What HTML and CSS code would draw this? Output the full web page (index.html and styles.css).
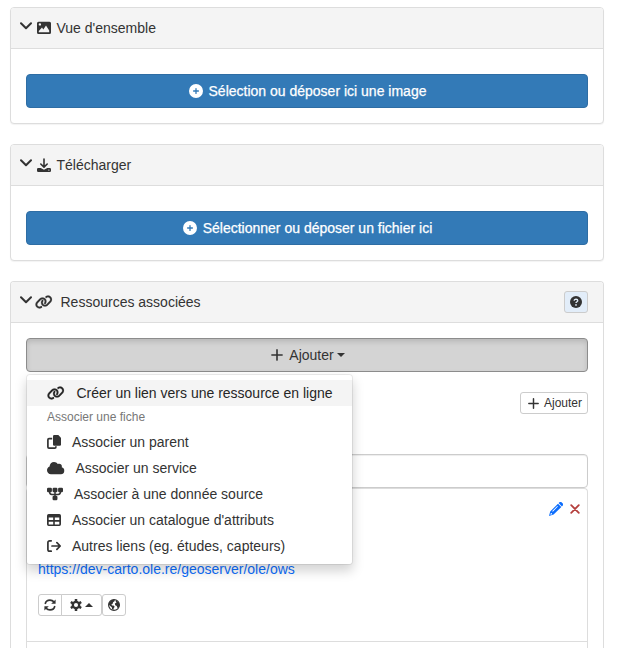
FILE: index.html
```
<!DOCTYPE html>
<html lang="fr">
<head>
<meta charset="utf-8">
<title>Ressources associées</title>
<link rel="stylesheet" href="styles.css">
</head>
<body>
<svg class="sprite" aria-hidden="true">
  <symbol id="chevron" viewBox="0 0 12 8"><path d="M1 1.200l5 5 5-5" fill="none" stroke="currentColor" stroke-width="2" stroke-linecap="round" stroke-linejoin="round"/></symbol>
  <symbol id="plus-circle" viewBox="0 0 512 512"><path d="M256 512A256 256 0 1 0 256 0a256 256 0 1 0 0 512zM232 344V280H168c-13.300 0-24-10.700-24-24s10.700-24 24-24h64V168c0-13.300 10.700-24 24-24s24 10.700 24 24v64h64c13.300 0 24 10.700 24 24s-10.700 24-24 24H280v64c0 13.300-10.700 24-24 24s-24-10.700-24-24z"/></symbol>
  <symbol id="link" viewBox="0 0 640 512"><path stroke="currentColor" stroke-width="8" d="M579.800 267.700c56.500-56.500 56.500-148 0-204.500c-50-50-128.800-56.500-186.300-15.400l-1.600 1.100c-14.400 10.300-17.700 30.300-7.400 44.600s30.300 17.700 44.600 7.400l1.600-1.100c32.100-22.900 76-19.300 103.800 8.600c31.500 31.500 31.500 82.500 0 114L422.300 334.800c-31.500 31.500-82.500 31.500-114 0c-27.900-27.900-31.500-71.800-8.600-103.800l1.100-1.600c10.300-14.400 6.900-34.400-7.400-44.600s-34.400-6.900-44.600 7.400l-1.100 1.600C206.500 251.200 213 330 263 380c56.500 56.500 148 56.500 204.500 0L579.800 267.700zM60.200 244.300c-56.500 56.500-56.500 148 0 204.500c50 50 128.800 56.500 186.300 15.400l1.600-1.100c14.400-10.300 17.700-30.300 7.400-44.600s-30.300-17.700-44.600-7.400l-1.600 1.100c-32.100 22.900-76 19.300-103.800-8.600C74 372 74 321 105.500 289.500L217.700 177.200c31.500-31.500 82.500-31.500 114 0c27.900 27.900 31.500 71.800 8.600 103.900l-1.100 1.600c-10.300 14.400-6.900 34.400 7.400 44.600s34.400 6.900 44.600-7.400l1.100-1.600C433.500 260.800 427 182 377 132c-56.500-56.500-148-56.500-204.500 0L60.200 244.300z"/></symbol>
  <symbol id="image" viewBox="0 0 14 14"><path fill-rule="evenodd" d="M1.500.7h11A1.500 1.500 0 0 1 14 2.200v9.300a1.500 1.500 0 0 1-1.500 1.500h-11A1.500 1.500 0 0 1 0 11.500V2.200A1.500 1.500 0 0 1 1.500.7zM2.900 2.200a1.200 1.200 0 1 0 0 2.400 1.200 1.200 0 0 0 0-2.400zM1.800 11.200h10.400V9.600L9 4.600 6.300 8.600 5 6.400 1.800 10z"/></symbol>
  <symbol id="download" viewBox="0 0 14 14"><path d="M7 1v7.800M3.800 6L7 9.100 10.200 6" fill="none" stroke="currentColor" stroke-width="1.600" stroke-linecap="round" stroke-linejoin="round"/><path fill-rule="evenodd" d="M1.200 10h2.500L7 11.800 10.300 10h2.500A1.200 1.200 0 0 1 14 11.200v1.600a1.200 1.200 0 0 1-1.200 1.200H1.200A1.200 1.200 0 0 1 0 12.800v-1.600A1.200 1.200 0 0 1 1.200 10zM11.900 11.500a.6.6 0 1 0 0 1.200.6.6 0 0 0 0-1.200z"/></symbol>
  <symbol id="help" viewBox="0 0 12 12"><circle cx="6" cy="6" r="6"/><path d="M4.200 4.700c0-2 3.600-1.900 3.600 0C7.800 5.700 6 5.800 6 7" fill="none" stroke="#e2edf9" stroke-width="1.300"/><circle cx="6" cy="8.900" r=".85" fill="#e2edf9"/></symbol>
  <symbol id="plus" viewBox="0 0 12 12"><path d="M6 .9v10.200M.9 6h10.200" fill="none" stroke="currentColor" stroke-width="1.600" stroke-linecap="round"/></symbol>
  <symbol id="copy" viewBox="0 0 14 14"><path d="M7.200 0h4.100L14 2.700v6.800a1.200 1.200 0 0 1-1.200 1.200H7.200A1.200 1.200 0 0 1 6 9.500V1.200A1.200 1.200 0 0 1 7.200 0z"/><path d="M5.200 3.700H2a1.100 1.100 0 0 0-1.100 1.100v7.200A1.100 1.100 0 0 0 2 13.100h5.800a1.100 1.100 0 0 0 1.100-1.100v-.8" fill="none" stroke="currentColor" stroke-width="1.700"/></symbol>
  <symbol id="cloud" viewBox="0 0 640 512"><path d="M0 336c0 79.500 64.500 144 144 144H512c70.700 0 128-57.300 128-128c0-61.900-44-113.600-102.400-125.400c4.100-10.700 6.400-22.400 6.400-34.600c0-53-43-96-96-96c-19.700 0-38.100 6-53.300 16.200C367 64.200 315.300 32 256 32C167.600 32 96 103.600 96 192c0 2.700 .1 5.400 .2 8.100C40.200 219.800 0 273.200 0 336z"/></symbol>
  <symbol id="sources" viewBox="0 0 16 14"><rect x="0" y=".8" width="4.900" height="4.500" rx="1.200"/><rect x="5.550" y=".8" width="4.900" height="4.500" rx="1.200"/><rect x="11.100" y=".8" width="4.900" height="4.500" rx="1.200"/><rect x="5.550" y="8.700" width="4.900" height="4.500" rx="1.200"/><path d="M2.500 4.500c0 2.300.5 2.900 2.300 2.900h6.400c1.800 0 2.300-.6 2.300-2.900M8 4.500v5" fill="none" stroke="currentColor" stroke-width="1.500"/></symbol>
  <symbol id="table" viewBox="0 0 14 14"><path fill-rule="evenodd" d="M1.700 1h10.600A1.700 1.700 0 0 1 14 2.700v8.600a1.700 1.700 0 0 1-1.700 1.700H1.700A1.700 1.700 0 0 1 0 11.300V2.700A1.700 1.700 0 0 1 1.700 1zM1.700 4.500v2.600h4.500V4.500zM7.800 4.500v2.600h4.500V4.500zM1.700 8.700v2.700h4.500V8.700zM7.800 8.700v2.700h4.500V8.700z"/></symbol>
  <symbol id="exit" viewBox="0 0 14 14"><path d="M4.200 1.800H2.600A1.700 1.700 0 0 0 .9 3.500v7a1.700 1.700 0 0 0 1.700 1.700h1.600M5 7h8M9.900 3.700L13.200 7l-3.300 3.300" fill="none" stroke="currentColor" stroke-width="1.700" stroke-linecap="round" stroke-linejoin="round"/></symbol>
  <symbol id="pencil" viewBox="0 0 14 14"><path fill-rule="evenodd" d="M9 1.700l3.300 3.300-7.700 7.600L0 14l1.200-4.500zM8.300 4L3.200 9.100l.6.600L8.900 4.600zM1.900 11l-.6 1.700 1.800-.5-.2-.9z"/><path d="M9.600 1.100l.6-.6a1.800 1.800 0 0 1 2.600 0l.7.7a1.800 1.800 0 0 1 0 2.600l-.6.600z"/></symbol>
  <symbol id="cross" viewBox="0 0 10 10"><path d="M1.200 1.200l7.600 7.600M8.800 1.200L1.200 8.800" fill="none" stroke="currentColor" stroke-width="1.800" stroke-linecap="round"/></symbol>
  <symbol id="refresh" viewBox="0 0 12 12"><path d="M1.200 5C1.600 2.600 3.700 1.100 6 1.100c1.600 0 2.900.6 4 1.800M10.800 7c-.4 2.400-2.500 3.900-4.800 3.900-1.600 0-2.900-.6-4-1.800" fill="none" stroke="currentColor" stroke-width="1.600"/><path d="M11.600.4v4.400H7.200zM.4 11.600V7.200h4.400z"/></symbol>
  <symbol id="gear" viewBox="0 0 12 12"><circle cx="6" cy="6" r="3.200" fill="none" stroke="currentColor" stroke-width="2.300"/><path d="M6 0v2.500M6 9.500V12M.8 3l2.200 1.300M9 7.700L11.200 9M.8 9L3 7.700M9 4.300L11.200 3" fill="none" stroke="currentColor" stroke-width="2.500"/></symbol>
  <symbol id="globe" viewBox="0 0 12 12"><circle cx="6" cy="6" r="5.400" fill="none" stroke="currentColor" stroke-width="1.200"/><path d="M1 3.700L3.200 1.200 6.300.6l.5 1.500-1.700 1.200L4.500 4.900l-1.200.5.8 1.100 1.500.1 1.100 1.200-1 1.500-.3 1.800-1.300-.9-.3-2L2.200 7 .6 5.600zM8 1l2.800 2.400.8 3L10.300 9l-1.200-.4-.3-1.700-1.600-.6-.3-1.700L8.500 3.500 7.700 2.400z"/></symbol>
</svg>

<section class="panel">
  <header class="panel-heading">
    <svg class="chevron"><use href="#chevron"/></svg>
    <svg class="icon"><use href="#image"/></svg>
    <span class="panel-title">Vue d'ensemble</span>
  </header>
  <div class="panel-body upload">
    <button class="btn btn-primary"><svg class="icon"><use href="#plus-circle"/></svg><span>Sélection ou déposer ici une image</span></button>
  </div>
</section>

<section class="panel">
  <header class="panel-heading">
    <svg class="chevron"><use href="#chevron"/></svg>
    <svg class="icon"><use href="#download"/></svg>
    <span class="panel-title">Télécharger</span>
  </header>
  <div class="panel-body upload">
    <button class="btn btn-primary"><svg class="icon"><use href="#plus-circle"/></svg><span>Sélectionner ou déposer un fichier ici</span></button>
  </div>
</section>

<section class="panel resources">
  <header class="panel-heading linked">
    <svg class="chevron"><use href="#chevron"/></svg>
    <svg class="icon wide"><use href="#link"/></svg>
    <span class="panel-title">Ressources associées</span>
    <button class="help"><svg><use href="#help"/></svg></button>
  </header>
  <div class="panel-body">
    <div class="dropdown">
      <button class="btn btn-open"><svg class="plus"><use href="#plus"/></svg><span>Ajouter</span><i class="caret"></i></button>
      <ul class="menu">
        <li class="item active"><svg class="icon wide"><use href="#link"/></svg><span class="spaced">Créer un lien vers une ressource en ligne</span></li>
        <li class="menu-header">Associer une fiche</li>
        <li class="item"><svg class="icon"><use href="#copy"/></svg><span>Associer un parent</span></li>
        <li class="item"><svg class="icon wide"><use href="#cloud"/></svg><span>Associer un service</span></li>
        <li class="item"><svg class="icon sources"><use href="#sources"/></svg><span>Associer à une donnée source</span></li>
        <li class="item"><svg class="icon"><use href="#table"/></svg><span>Associer un catalogue d'attributs</span></li>
        <li class="item"><svg class="icon"><use href="#exit"/></svg><span>Autres liens (eg. études, capteurs)</span></li>
      </ul>
    </div>
    <div class="toolbar"><button class="btn-small"><svg class="plus"><use href="#plus"/></svg><span>Ajouter</span></button></div>
    <input class="filter" type="text">
    <div class="list">
      <article class="resource">
        <div class="actions"><svg class="edit"><use href="#pencil"/></svg><svg class="remove"><use href="#cross"/></svg></div>
        <a class="url">https://dev-carto.ole.re/geoserver/ole/ows</a>
        <div class="tools">
          <button class="tool"><svg><use href="#refresh"/></svg></button>
          <button class="tool settings"><svg><use href="#gear"/></svg><i class="caret up"></i></button>
          <button class="tool world"><svg><use href="#globe"/></svg></button>
        </div>
      </article>
    </div>
  </div>
</section>
</body>
</html>
```
FILE: styles.css
```
* { box-sizing: border-box; }
body {
  margin: 0;
  padding: 7px 14px 0 10px;
  background: #fff;
  color: #333;
  font: 14px/20px "Liberation Sans", Arial, sans-serif;
}
button { font: inherit; color: inherit; padding: 0; }
svg { display: block; flex: none; fill: currentColor; }
.sprite { position: absolute; width: 0; height: 0; }

.panel {
  margin-bottom: 20px;
  border: 1px solid #ddd;
  border-radius: 4px;
  background: #fff;
  box-shadow: 0 1px 1px rgba(0, 0, 0, .05);
}
.panel-heading {
  display: flex;
  align-items: center;
  height: 41px;
  padding: 0 15px 0 9px;
  border-bottom: 1px solid #ddd;
  border-radius: 3px 3px 0 0;
  background: #f4f4f4;
}
.chevron { width: 12px; height: 8px; margin: -4px 5px 0 0; }
.icon { width: 14px; height: 14px; }
.icon.wide { width: 17.500px; }
.icon.sources { width: 16px; }
.panel-title { margin-left: 5.500px; }
.linked .icon { margin-left: -2px; }
.linked .panel-title { margin-left: 8px; }
.help {
  display: flex;
  align-items: center;
  justify-content: center;
  width: 24px;
  height: 22px;
  margin-left: auto;
  border: 1px solid #ccc;
  border-radius: 3px;
  background: #e2edf9;
}
.help svg { width: 12px; height: 12px; }
.panel-body { padding: 15px; }
.panel-body.upload { padding-top: 25px; }

/* The last panel continues past the fold. */
.resources { margin-bottom: 0; border-bottom: 0; border-radius: 4px 4px 0 0; box-shadow: none; }
.resources .panel-body { padding-bottom: 0; }

.btn {
  display: flex;
  align-items: center;
  justify-content: center;
  width: 100%;
  height: 34px;
  border: 1px solid;
  border-radius: 4px;
}
.btn-primary { gap: 5.500px; padding-left: 1.500px; background: #337ab7; border-color: #2e6da4; color: #fff; -webkit-text-stroke: .25px #fff; }
.btn-open {
  padding-left: 2px;
  background: #d4d4d4;
  border-color: #8c8c8c;
  box-shadow: inset 0 3px 5px rgba(0, 0, 0, .125);
}
.plus { width: 12px; height: 12px; }
.btn-open span { margin: 0 2px 0 6px; }
.caret { border: 4px solid transparent; border-top-color: currentColor; border-bottom: 0; margin-left: 1px; }
.caret.up { border-top: 0; border-bottom: 4px solid; border-left-color: transparent; border-right-color: transparent; }

.dropdown { position: relative; }
.menu {
  position: absolute;
  z-index: 1;
  top: 36px;
  left: 0;
  width: 327px;
  margin: 0;
  padding: 5px 0;
  list-style: none;
  border: 1px solid rgba(0, 0, 0, .07);
  border-radius: 4px;
  background: #fff;
  background-clip: padding-box;
  box-shadow: 0 6px 12px rgba(0, 0, 0, .175);
}
.item { display: flex; align-items: center; height: 26px; padding: 0 20px; white-space: nowrap; }
.item span { margin-left: 11px; }
.item .spaced { margin-left: 12px; }
.item.active { background: #f4f4f4; color: #262626; }
.menu-header { height: 23px; padding: 3px 20px; color: #777; font-size: 12px; line-height: 17px; }

.toolbar { display: flex; justify-content: flex-end; margin: 20px 0 40px; }
.btn-small {
  display: flex;
  align-items: center;
  justify-content: center;
  gap: 5px;
  width: 68px;
  height: 22px;
  padding-left: 2px;
  border: 1px solid #ccc;
  border-radius: 3px;
  background: #fff;
  font-size: 12px;
}
.btn-small .plus { width: 11px; height: 11px; }
.filter {
  display: block;
  width: 100%;
  height: 34px;
  border: 1px solid #ccc;
  border-radius: 4px;
  background: #fff;
  box-shadow: inset 0 1px 1px rgba(0, 0, 0, .075);
}
.list { height: 160px; border: 1px solid #ddd; border-bottom: 0; border-radius: 4px 4px 0 0; }
.resource { height: 153px; padding: 12px 7px 0 11px; border-bottom: 1px solid #ddd; }
.actions { display: flex; justify-content: flex-end; align-items: center; gap: 7px; height: 16px; }
.edit { width: 14px; height: 14px; color: #0d6efd; }
.remove { width: 10px; height: 10px; color: #b5403e; }
.url { display: block; margin-top: 42px; color: #0d6efd; }
.tools { display: flex; margin-top: 15px; }
.tool {
  display: flex;
  align-items: center;
  justify-content: center;
  width: 24px;
  height: 22px;
  border: 1px solid #ccc;
  border-radius: 3px 0 0 3px;
  background: #fff;
}
.tool svg { width: 12px; height: 12px; }
.settings { gap: 2px; width: 41px; margin-left: -1px; border-radius: 0 3px 3px 0; }
.world { border-radius: 3px; }
```
